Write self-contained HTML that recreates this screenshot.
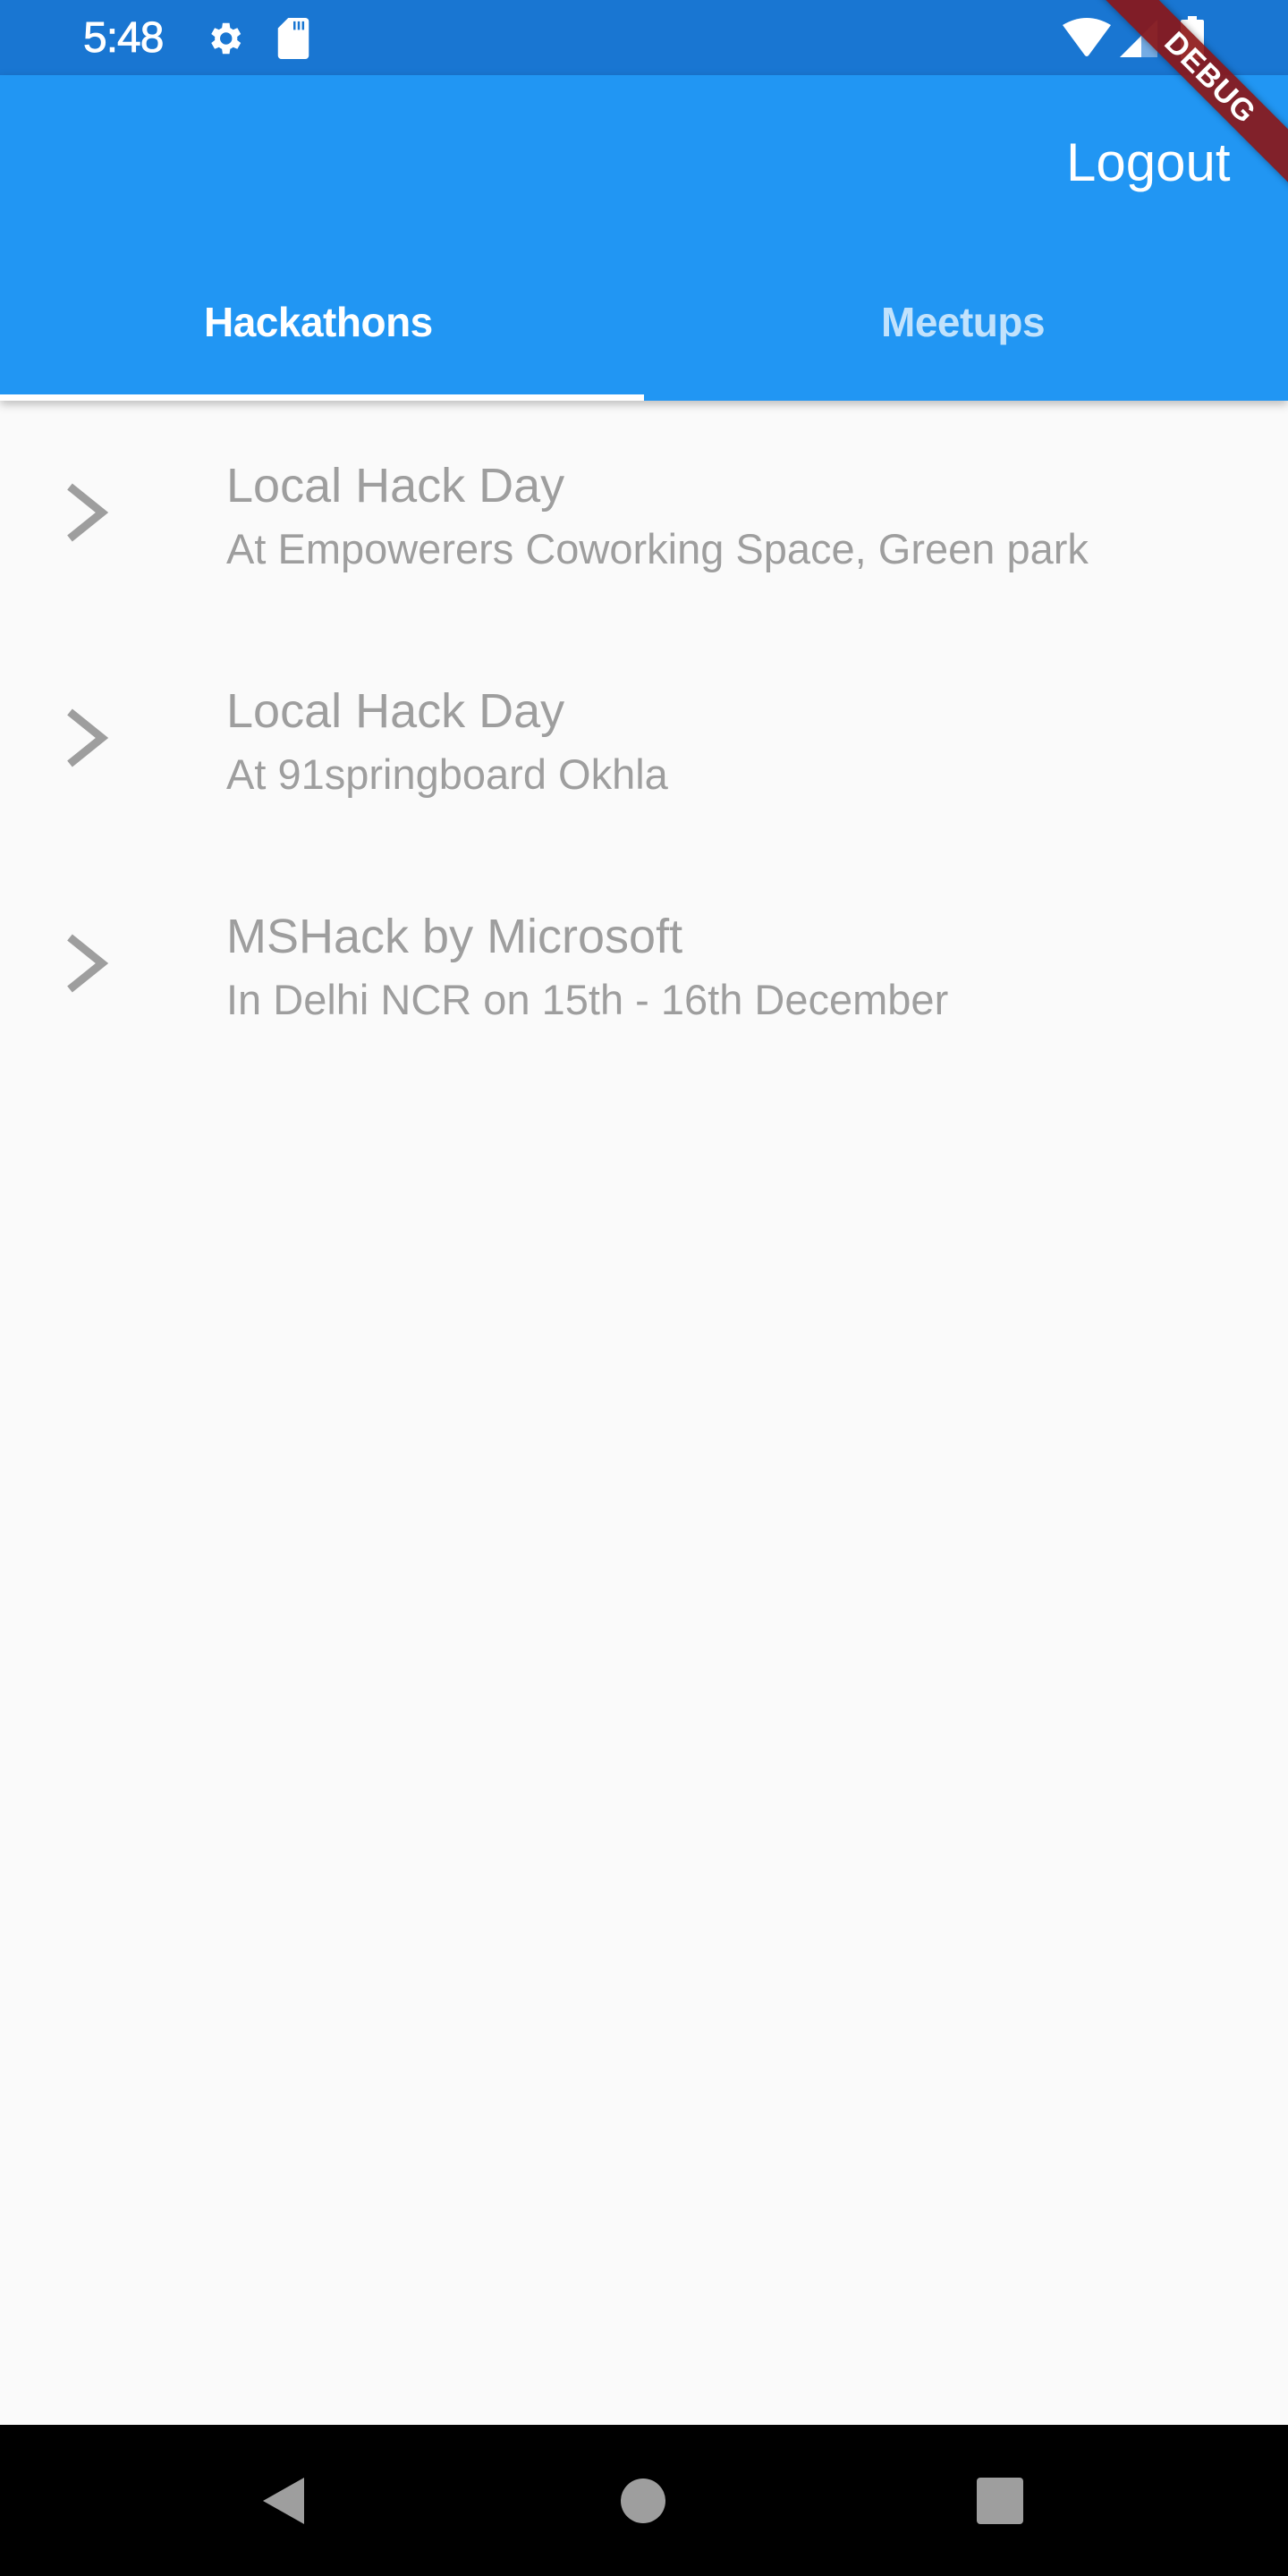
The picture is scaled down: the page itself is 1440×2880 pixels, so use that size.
<!DOCTYPE html>
<html><head><meta charset="utf-8">
<style>
*{margin:0;padding:0;box-sizing:border-box}
html,body{width:1440px;height:2880px;overflow:hidden;background:#FAFAFA;font-family:"Liberation Sans",Roboto,sans-serif;position:relative}
.abs{position:absolute}
#status{left:0;top:0;width:1440px;height:84px;background:#1976D2}
#appbar{left:0;top:84px;width:1440px;height:364px;background:#2196F3;box-shadow:0 4px 10px rgba(0,0,0,0.25)}
.t{position:absolute;white-space:nowrap;line-height:1}
.title{font-size:54px;color:#9E9E9E}
.sub{font-size:47px;color:#9E9E9E}
</style></head><body>
<div id="status" class="abs"></div>
<div class="t" style="left:93px;top:19px;font-size:48px;color:#fff;letter-spacing:-1px;-webkit-text-stroke:0.8px #fff">5:48</div>
<svg class="abs" style="left:228px;top:20px" width="46" height="46" viewBox="0 0 24 24"><path fill="#fff" d="M19.4 13a7.5 7.5 0 0 0 0-2l2.1-1.6-2-3.5-2.5 1a7.3 7.3 0 0 0-1.7-1L14.9 3h-4l-.4 2.9c-.6.2-1.2.6-1.7 1l-2.5-1-2 3.5L6.4 11a7.5 7.5 0 0 0 0 2l-2.1 1.6 2 3.5 2.5-1c.5.4 1.1.8 1.7 1l.4 2.9h4l.4-2.9c.6-.2 1.2-.6 1.7-1l2.5 1 2-3.5zM12.9 15.5a3.5 3.5 0 1 1 0-7 3.5 3.5 0 0 1 0 7z"/></svg>
<svg class="abs" style="left:310px;top:20px" width="36" height="46" viewBox="0 0 18 24"><path fill="#fff" d="M6 0h10a2 2 0 0 1 2 2v20a2 2 0 0 1-2 2H2a2 2 0 0 1-2-2V6z"/><path fill="#1976D2" d="M9 2h1.3v5H9zM11.5 2h1.3v5h-1.3zM14 2h1.3v5H14z"/></svg>
<svg class="abs" style="left:1188px;top:20px" width="54" height="44" viewBox="0 0 54 44"><path fill="#fff" d="M0 8Q27-8 54 8L29 42Q27 44 25 42z"/></svg>
<svg class="abs" style="left:1252px;top:22px" width="42" height="42" viewBox="0 0 42 42"><path fill="#fff" d="M42 0V42H0z" opacity="0.4"/><path fill="#fff" d="M24 18V42H0z"/></svg>
<svg class="abs" style="left:1320px;top:18px" width="26" height="48" viewBox="0 0 26 48"><path fill="#fff" d="M8 0h10v4h6a2 2 0 0 1 2 2v40a2 2 0 0 1-2 2H2a2 2 0 0 1-2-2V6a2 2 0 0 1 2-2h6z"/></svg>

<div id="appbar" class="abs"></div>
<div class="t" style="left:1192px;top:152px;font-size:60px;color:#fff">Logout</div>
<div class="t" style="left:228px;top:337px;font-size:46px;color:#fff;font-weight:bold;letter-spacing:-0.5px">Hackathons</div>
<div class="t" style="left:985px;top:337px;font-size:46px;color:rgba(255,255,255,0.72);font-weight:bold;letter-spacing:-0.5px">Meetups</div>
<div class="abs" style="left:0;top:441px;width:720px;height:7px;background:#fff"></div>

<div class="abs" style="left:1153px;top:66px;width:400px;height:42px;background:rgba(140,20,20,0.9);transform:rotate(45deg);box-shadow:0 0 8px rgba(0,0,0,0.4);color:#fff;font-weight:bold;font-size:34px;text-align:center;line-height:42px;letter-spacing:1px">DEBUG</div>

<svg class="abs" style="left:70px;top:538px" width="56" height="70" viewBox="0 0 56 70"><path d="M8 6L44 35L8 64" fill="none" stroke="#9E9E9E" stroke-width="9"/></svg>
<div class="t title" style="left:253px;top:516px">Local Hack Day</div>
<div class="t sub" style="left:253px;top:590px">At Empowerers Coworking Space, Green park</div>

<svg class="abs" style="left:70px;top:790px" width="56" height="70" viewBox="0 0 56 70"><path d="M8 6L44 35L8 64" fill="none" stroke="#9E9E9E" stroke-width="9"/></svg>
<div class="t title" style="left:253px;top:768px">Local Hack Day</div>
<div class="t sub" style="left:253px;top:842px">At 91springboard Okhla</div>

<svg class="abs" style="left:70px;top:1042px" width="56" height="70" viewBox="0 0 56 70"><path d="M8 6L44 35L8 64" fill="none" stroke="#9E9E9E" stroke-width="9"/></svg>
<div class="t title" style="left:253px;top:1020px">MSHack by Microsoft</div>
<div class="t sub" style="left:253px;top:1094px">In Delhi NCR on 15th - 16th December</div>

<div class="abs" style="left:0;top:2711px;width:1440px;height:169px;background:#000"></div>
<svg class="abs" style="left:290px;top:2768px" width="54" height="56" viewBox="0 0 54 56"><path fill="#9E9E9E" d="M50 2V54L4 28z"/></svg>
<div class="abs" style="left:694px;top:2771px;width:50px;height:50px;border-radius:50%;background:#9E9E9E"></div>
<div class="abs" style="left:1092px;top:2770px;width:52px;height:52px;border-radius:4px;background:#9E9E9E"></div>
</body></html>
